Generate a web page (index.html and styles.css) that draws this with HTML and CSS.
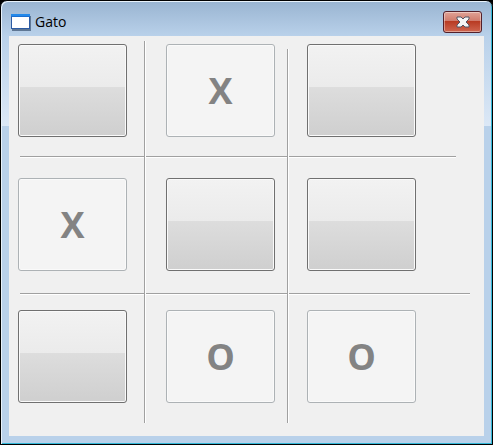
FILE: index.html
```html
<!DOCTYPE html>
<html lang="es">
<head>
  <meta charset="UTF-8">
  <title>Gato</title>
  <meta name="viewport" content="width=device-width, initial-scale=1">
  <link rel="stylesheet" href="styles.css">
</head>
<body>
  <div class="window">
    <header class="titlebar">
      <svg class="app-icon" width="20" height="17" viewBox="0 0 20 17" aria-hidden="true">
        <path d="M1 15h19v2H1z" fill="#5f7794"/>
        <path d="M18 2h2v14h-2z" fill="#5f7794"/>
        <rect x="0" y="0" width="19" height="15" fill="#2c5ba3"/>
        <rect x="1" y="3" width="17" height="11" fill="#fff"/>
        <rect x="0" y="0" width="19" height="2" fill="#2389ea"/>
        <rect x="0" y="2" width="19" height="1" fill="#1c6fd0"/>
      </svg>
      <h1>Gato</h1>
      <button class="close" type="button" aria-label="Cerrar">
        <svg width="14" height="12" viewBox="0 0 14 12" aria-hidden="true">
          <path d="M1 1h4l2 2 2-2h4v2l-3 3 3 3v2h-4l-2-2-2 2h-4v-2l3-3-3-3z" fill="#f5f5f5" stroke="#535666" stroke-linejoin="round"/>
        </svg>
      </button>
    </header>
    <main class="board">
      <button class="cell a1" type="button" aria-label="Casilla 1"></button>
      <button class="cell a2" type="button" disabled>X</button>
      <button class="cell a3" type="button" aria-label="Casilla 3"></button>
      <button class="cell b1" type="button" disabled>X</button>
      <button class="cell b2" type="button" aria-label="Casilla 5"></button>
      <button class="cell b3" type="button" aria-label="Casilla 6"></button>
      <button class="cell c1" type="button" aria-label="Casilla 7"></button>
      <button class="cell c2" type="button" disabled>O</button>
      <button class="cell c3" type="button" disabled>O</button>
      <hr class="line row-line upper">
      <hr class="line row-line lower">
      <hr class="line col-line left">
      <hr class="line col-line right">
    </main>
  </div>
</body>
</html>
```

FILE: styles.css
```css
:root {
  --frame: #b9d1ea;
  --face: #f0f0f0;
  --edge: #707070;
  --shadow: #a0a0a0;
}
*, *::before, *::after { box-sizing: border-box; }
body {
  margin: 0;
  background: #000;
  font-family: "Open Sans", "Noto Sans", sans-serif;
}
.window {
  display: flex;
  flex-direction: column;
  min-height: 100vh;
  padding: 0 7px 7px;
  border: 1px solid #000;
  border-radius: 7px 7px 0 0;
  background:
    linear-gradient(#b9d1ea, #dce8f6) 0 35px / 100% 90px no-repeat,
    linear-gradient(#99b4d1, #b9d1ea) 0 0 / 100% 35px no-repeat,
    var(--frame);
  box-shadow: inset 1px 1px #e8f2fb, inset -1px -1px #32b8d8;
}
.titlebar {
  display: flex;
  align-items: center;
  height: 35px;
  padding: 7px 3px 0;
}
h1 {
  flex: 1;
  margin: 0 0 0 4px;
  font-size: 14px;
  font-weight: 400;
  line-height: 20px;
}
.close {
  display: flex;
  align-items: center;
  justify-content: center;
  width: 39px;
  height: 22px;
  padding: 0;
  border: 1px solid #53202a;
  border-radius: 3px;
  background: linear-gradient(#e0a296, #cf7a6b 46%, #b83a22 46%, #cf6650);
  box-shadow: inset 0 0 0 1px rgba(255, 255, 255, 0.4);
}
.board {
  flex: 1;
  display: grid;
  grid-template-columns: 109px 17fr 2px 20fr 109px 12fr 2px 18fr 109px 68fr;
  grid-template-rows: 93px 19fr 2px 20fr 93px 22fr 2px 15fr 93px 33fr;
  padding: 8px 0 0 9px;
  margin: 0 1px 1px 1px;
  background: var(--face);
}
.cell {
  padding: 0;
  border: 1px solid var(--edge);
  border-radius: 3px;
  background: linear-gradient(#f2f2f2, #ebebeb 46%, #dddddd 46%, #cfcfcf);
  box-shadow: inset 0 0 0 1px #fafafa;
  font-family: "Open Sans", "Noto Sans", sans-serif;
  font-size: 36px;
  font-weight: 700;
}
.cell:disabled {
  border-color: #adb2b5;
  background: #f4f4f4;
  color: #838383;
}
.a1 { grid-area: 1 / 1; }
.a2 { grid-area: 1 / 5; }
.a3 { grid-area: 1 / 9; }
.b1 { grid-area: 5 / 1; }
.b2 { grid-area: 5 / 5; }
.b3 { grid-area: 5 / 9; }
.c1 { grid-area: 9 / 1; }
.c2 { grid-area: 9 / 5; }
.c3 { grid-area: 9 / 9; }

/* etched separators */
.line {
  border: 0 solid var(--shadow);
  background: #fff;
}
.row-line {
  grid-column: 1 / -1;
  margin: 0 28px 0 2px;
  border-top-width: 1px;
}
.col-line {
  grid-row: 1 / -1;
  margin: -3px 0 13px;
  border-left-width: 1px;
}
.upper { grid-row: 3; }
.lower {
  grid-row: 7;
  margin-right: 14px;
}
.left { grid-column: 3; }
.right {
  grid-column: 7;
  margin-top: 5px;
}
```
